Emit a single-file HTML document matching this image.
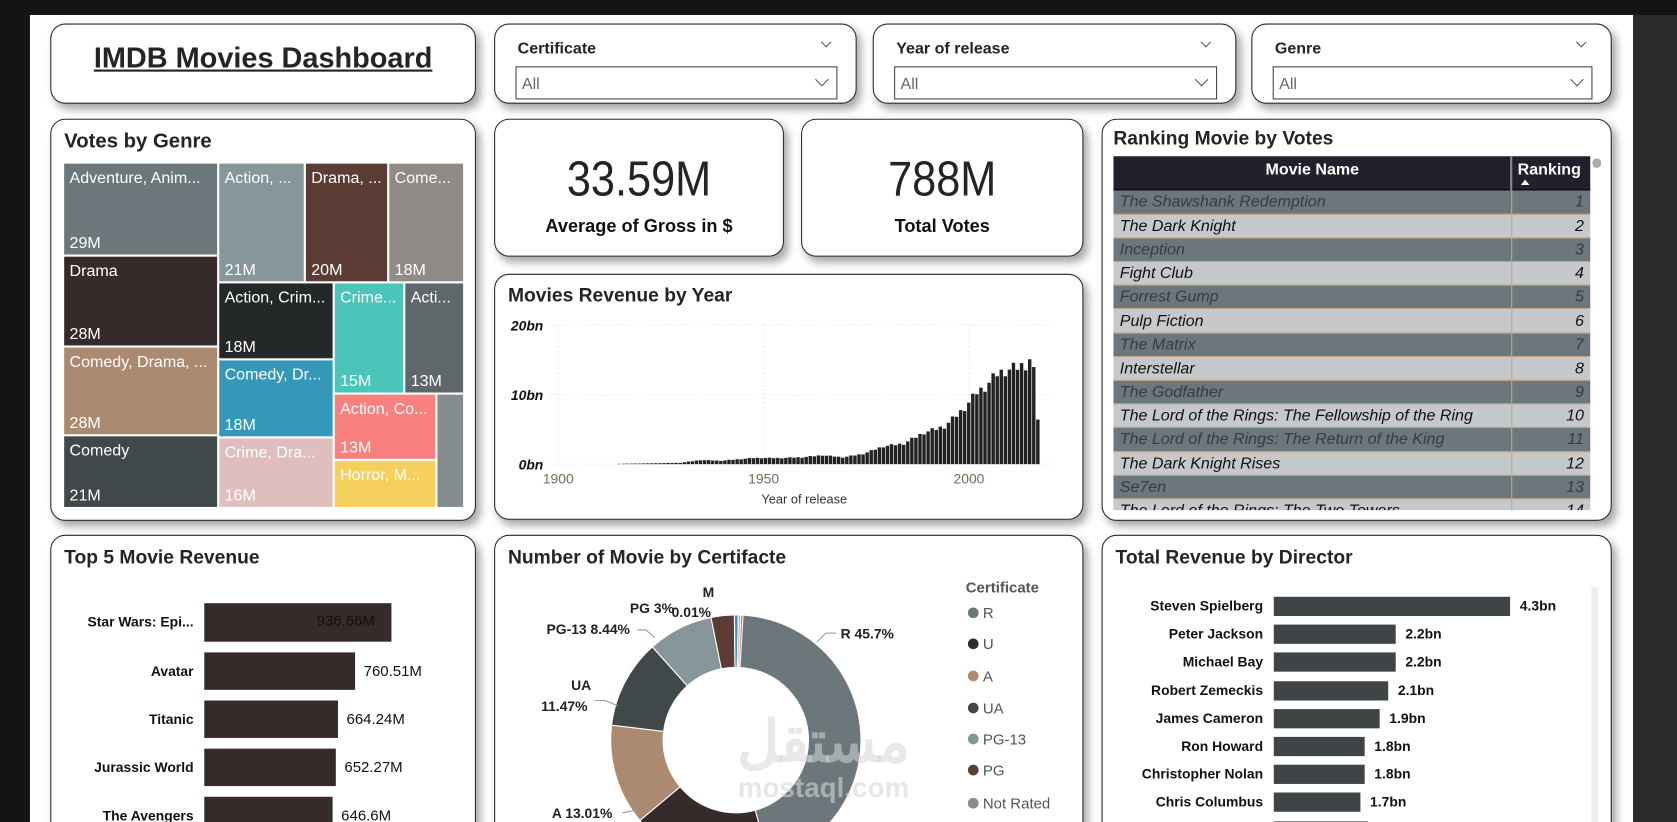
<!DOCTYPE html>
<html><head><meta charset="utf-8">
<style>
*{margin:0;padding:0;box-sizing:border-box}
html,body{width:1677px;height:822px;overflow:hidden;background:#141414;font-family:"Liberation Sans",Arial,sans-serif}
#w{position:absolute;left:0;top:0;width:1568px;height:769px;transform:scale(1.0695);transform-origin:0 0;overflow:hidden}
.abs{position:absolute}
.canvas{left:28px;top:14px;width:1499px;height:770px;background:#fff}
.rs{left:1527px;top:14px;width:41px;height:770px;background:#2a2a2a}
.p{position:absolute;background:#fff;border:1.5px solid #2a2a2a;border-radius:14px;box-shadow:4px 5px 8px rgba(0,0,0,.35)}
.t{position:absolute;font-weight:bold;color:#252423;font-size:19px}
.sl .lab{position:absolute;left:21px;top:14px;font-weight:bold;font-size:15px;color:#252423}
.sl .box{position:absolute;left:19px;top:39px;right:17px;height:31px;border:1px solid #444}
.sl .box span{position:absolute;left:5px;top:7px;font-size:15px;color:#666}
.chev{position:absolute;width:9px;height:9px;border-right:1.3px solid #555;border-bottom:1.3px solid #555;transform:rotate(45deg)}
.cell{position:absolute;color:#fff;font-size:15px;overflow:hidden;white-space:nowrap}
.cell .a{position:absolute;left:5px;top:5px}
.cell .b{position:absolute;left:5px;bottom:2px}
.kpi{position:absolute;width:100%;text-align:center;font-family:"Liberation Sans",sans-serif;font-size:46px;color:#252423;top:28px;transform:scaleX(0.88)}
.kl{position:absolute;width:100%;text-align:center;font-weight:bold;font-size:17px;color:#111;top:90px}
table{border-collapse:collapse;font-size:15px;font-style:italic}
td{height:22.2px;padding:0 6px;border-bottom:1.5px solid #c8a27e;white-space:nowrap}
tr.d td{background:#6b777b;color:#363c40}
tr.l td{background:#c5c9cb;color:#111}
td.n{text-align:right;border-left:1.5px solid #c8a27e}
.hb{position:absolute;font-size:13px;font-weight:bold;color:#111;text-align:right}
</style></head><body>
<div id="w">
<div class="abs canvas"></div>
<div class="abs rs"></div>

<div class="p" style="left:47px;top:22px;width:398px;height:75px">
 <div class="abs" style="left:0;width:100%;top:16px;text-align:center;font-weight:bold;font-size:27px;color:#252423;text-decoration:underline">IMDB Movies Dashboard</div>
</div>

<div class="p sl" style="left:462px;top:22px;width:339px;height:75px"><div class="lab">Certificate</div><div class="chev" style="right:24px;top:13px;width:7px;height:7px"></div><div class="box"><span>All</span><div class="chev" style="right:9px;top:7px"></div></div></div>
<div class="p sl" style="left:816px;top:22px;width:340px;height:75px"><div class="lab">Year of release</div><div class="chev" style="right:24px;top:13px;width:7px;height:7px"></div><div class="box"><span>All</span><div class="chev" style="right:9px;top:7px"></div></div></div>
<div class="p sl" style="left:1170px;top:22px;width:337px;height:75px"><div class="lab">Genre</div><div class="chev" style="right:24px;top:13px;width:7px;height:7px"></div><div class="box"><span>All</span><div class="chev" style="right:9px;top:7px"></div></div></div>

<div class="p" style="left:47px;top:111px;width:398px;height:376px">
 <div class="t" style="left:12px;top:10px">Votes by Genre</div>
</div>
<div class="abs" style="left:0;top:0">
 <div class="cell" style="left:60px;top:153px;width:143px;height:85px;background:#6b777b"><span class="a">Adventure, Anim...</span><span class="b">29M</span></div>
 <div class="cell" style="left:205px;top:153px;width:79px;height:110px;background:#87969a"><span class="a">Action, ...</span><span class="b">21M</span></div>
 <div class="cell" style="left:286px;top:153px;width:76px;height:110px;background:#5c3d36"><span class="a">Drama, ...</span><span class="b">20M</span></div>
 <div class="cell" style="left:364px;top:153px;width:69px;height:110px;background:#908b86"><span class="a">Come...</span><span class="b">18M</span></div>
 <div class="cell" style="left:60px;top:240px;width:143px;height:83px;background:#372a2a"><span class="a">Drama</span><span class="b">28M</span></div>
 <div class="cell" style="left:60px;top:325px;width:143px;height:81px;background:#ac8a72"><span class="a">Comedy, Drama, ...</span><span class="b">28M</span></div>
 <div class="cell" style="left:60px;top:408px;width:143px;height:66px;background:#414849"><span class="a">Comedy</span><span class="b">21M</span></div>
 <div class="cell" style="left:205px;top:265px;width:106px;height:70px;background:#242829"><span class="a">Action, Crim...</span><span class="b">18M</span></div>
 <div class="cell" style="left:205px;top:337px;width:106px;height:71px;background:#3498b9"><span class="a">Comedy, Dr...</span><span class="b">18M</span></div>
 <div class="cell" style="left:205px;top:410px;width:106px;height:64px;background:#dfbfbe"><span class="a">Crime, Dra...</span><span class="b">16M</span></div>
 <div class="cell" style="left:313px;top:265px;width:64px;height:102px;background:#4bc4ba"><span class="a">Crime...</span><span class="b">15M</span></div>
 <div class="cell" style="left:379px;top:265px;width:54px;height:102px;background:#5e6769"><span class="a">Acti...</span><span class="b">13M</span></div>
 <div class="cell" style="left:313px;top:369px;width:94px;height:60px;background:#f88180"><span class="a">Action, Co...</span><span class="b">13M</span></div>
 <div class="cell" style="left:313px;top:431px;width:94px;height:43px;background:#f5d05c"><span class="a">Horror, M...</span></div>
 <div class="cell" style="left:409px;top:369px;width:24px;height:105px;background:#848c8d"></div>
</div>

<div class="p" style="left:462px;top:111px;width:271px;height:129px"><div class="kpi">33.59M</div><div class="kl">Average of Gross in $</div></div>
<div class="p" style="left:749px;top:111px;width:264px;height:129px"><div class="kpi">788M</div><div class="kl">Total Votes</div></div>

<div class="p" style="left:462px;top:256px;width:551px;height:230px">
 <div class="t" style="left:12px;top:9px;font-size:18px">Movies Revenue by Year</div>
</div>
<svg class="abs" style="left:0;top:0" width="1568" height="769">
 <g stroke="#ddd" stroke-dasharray="1,3" stroke-width="1">
  <line x1="514" y1="304" x2="985" y2="304"/><line x1="514" y1="369" x2="985" y2="369"/><line x1="514" y1="434" x2="985" y2="434"/>
  <line x1="522" y1="304" x2="522" y2="434"/><line x1="714" y1="304" x2="714" y2="434"/><line x1="906" y1="304" x2="906" y2="434"/>
 </g>
 <g font-family="Liberation Sans" font-size="13" font-weight="bold" font-style="italic" fill="#111" text-anchor="end">
  <text x="508" y="309">20bn</text><text x="508" y="374">10bn</text><text x="508" y="439">0bn</text>
 </g>
 <g font-family="Liberation Sans" font-size="13" fill="#7a6a55" text-anchor="middle">
  <text x="522" y="452">1900</text><text x="714" y="452">1950</text><text x="906" y="452">2000</text>
 </g>
 <text x="752" y="471" font-family="Liberation Sans" font-size="12" fill="#333" text-anchor="middle">Year of release</text>
 <g id="bars" fill="#222"></g>
</svg>

<div class="p" style="left:1030px;top:111px;width:477px;height:376px;overflow:hidden">
 <div class="t" style="left:10px;top:7px;font-size:18px">Ranking Movie by Votes</div>
 <div class="abs" style="left:10px;top:34px;width:446px;height:331px;overflow:hidden">
  <div style="height:32px;background:#22202c;color:#fff;font-weight:bold;font-size:15px;position:relative;border-bottom:1.5px solid #000">
   <span class="abs" style="left:0;width:372px;text-align:center;top:4px">Movie Name</span>
   <span class="abs" style="left:371px;top:0;width:1.5px;height:32px;background:#888"></span>
   <span class="abs" style="left:378px;top:4px">Ranking</span>
   <span class="abs" style="left:381px;top:22px;width:0;height:0;border-left:4px solid transparent;border-right:4px solid transparent;border-bottom:5px solid #fff"></span>
  </div>
  <table style="width:446px">
   <col style="width:372px"><col>
   <tr class="d"><td>The Shawshank Redemption</td><td class="n">1</td></tr>
   <tr class="l"><td>The Dark Knight</td><td class="n">2</td></tr>
   <tr class="d"><td>Inception</td><td class="n">3</td></tr>
   <tr class="l"><td>Fight Club</td><td class="n">4</td></tr>
   <tr class="d"><td>Forrest Gump</td><td class="n">5</td></tr>
   <tr class="l"><td>Pulp Fiction</td><td class="n">6</td></tr>
   <tr class="d"><td>The Matrix</td><td class="n">7</td></tr>
   <tr class="l"><td>Interstellar</td><td class="n">8</td></tr>
   <tr class="d"><td>The Godfather</td><td class="n">9</td></tr>
   <tr class="l"><td>The Lord of the Rings: The Fellowship of the Ring</td><td class="n">10</td></tr>
   <tr class="d"><td>The Lord of the Rings: The Return of the King</td><td class="n">11</td></tr>
   <tr class="l"><td>The Dark Knight Rises</td><td class="n">12</td></tr>
   <tr class="d"><td>Se7en</td><td class="n">13</td></tr>
   <tr class="l"><td>The Lord of the Rings: The Two Towers</td><td class="n">14</td></tr>
  </table>
 </div>
 <div class="abs" style="left:458px;top:36px;width:8px;height:9px;border-radius:4px;background:#aaa"></div>
</div>

<div class="p" style="left:47px;top:500px;width:398px;height:310px">
 <div class="t" style="left:12px;top:10px;font-size:18px">Top 5 Movie Revenue</div>
</div>
<div class="abs" style="left:0;top:0">
 <div class="hb" style="left:40px;width:141px;top:574px">Star Wars: Epi...</div>
 <div class="abs" style="left:191px;top:564px;width:175px;height:36px;background:#352b2b"></div>
 <div class="abs" style="left:296px;top:572px;font-size:14px;color:#111">936.66M</div>
 <div class="hb" style="left:40px;width:141px;top:620px">Avatar</div>
 <div class="abs" style="left:191px;top:610px;width:141px;height:35px;background:#352b2b"></div>
 <div class="abs" style="left:340px;top:619px;font-size:14px;color:#111">760.51M</div>
 <div class="hb" style="left:40px;width:141px;top:665px">Titanic</div>
 <div class="abs" style="left:191px;top:655px;width:125px;height:35px;background:#352b2b"></div>
 <div class="abs" style="left:324px;top:664px;font-size:14px;color:#111">664.24M</div>
 <div class="hb" style="left:40px;width:141px;top:710px">Jurassic World</div>
 <div class="abs" style="left:191px;top:700px;width:123px;height:35px;background:#352b2b"></div>
 <div class="abs" style="left:322px;top:709px;font-size:14px;color:#111">652.27M</div>
 <div class="hb" style="left:40px;width:141px;top:755px">The Avengers</div>
 <div class="abs" style="left:191px;top:745px;width:120px;height:35px;background:#352b2b"></div>
 <div class="abs" style="left:319px;top:754px;font-size:14px;color:#111">646.6M</div>
</div>

<div class="p" style="left:462px;top:500px;width:551px;height:310px">
 <div class="t" style="left:12px;top:10px;font-size:18px">Number of Movie by Certifacte</div>
</div>
<svg class="abs" style="left:0;top:0" width="1568" height="769">
 <g id="slices"></g>
 <g font-family="Liberation Sans" font-size="13" font-weight="bold" fill="#222">
  <text x="786" y="597">R 45.7%</text>
  <text x="511" y="593">PG-13 8.44%</text>
  <text x="589" y="573">PG 3%</text>
  <text x="657" y="558">M</text>
  <text x="628" y="577">0.01%</text>
  <text x="534" y="645">UA</text>
  <text x="506" y="665">11.47%</text>
  <text x="516" y="765">A 13.01%</text>
 </g>
 <g stroke="#999" fill="none" stroke-width="1">
  <polyline points="782,592 772,592 764,600"/>
  <polyline points="596,589 604,589 612,596"/>
  <polyline points="556,655 566,655 578,660"/>
  <polyline points="582,760 592,758 602,748"/>
 </g>
 <text x="903" y="554" font-family="Liberation Sans" font-size="14" font-weight="bold" fill="#555">Certificate</text>
 <g font-family="Liberation Sans" font-size="14" fill="#555">
  <circle cx="910" cy="573" r="5" fill="#6b777b"/><text x="919" y="578">R</text>
  <circle cx="910" cy="602" r="5" fill="#372a2a"/><text x="919" y="607">U</text>
  <circle cx="910" cy="632" r="5" fill="#ac8a72"/><text x="919" y="637">A</text>
  <circle cx="910" cy="662" r="5" fill="#414849"/><text x="919" y="667">UA</text>
  <circle cx="910" cy="691" r="5" fill="#87969a"/><text x="919" y="696">PG-13</text>
  <circle cx="910" cy="720" r="5" fill="#5c3d36"/><text x="919" y="725">PG</text>
  <circle cx="910" cy="751" r="5" fill="#908b86"/><text x="919" y="756">Not Rated</text>
 </g>
 <text x="770" y="712" font-family="Liberation Sans, Noto Sans CJK SC, sans-serif" font-size="54" font-weight="bold" fill="#d6d6d6" fill-opacity=".55" text-anchor="middle">مستقل</text>
 <text x="770" y="745" font-family="Liberation Sans" font-size="26" font-weight="bold" fill="#d6d6d6" fill-opacity=".6" text-anchor="middle">mostaql.com</text>
</svg>

<div class="p" style="left:1030px;top:500px;width:477px;height:310px">
 <div class="t" style="left:12px;top:10px;font-size:18px">Total Revenue by Director</div>
 <div class="abs" style="left:457px;top:48px;width:6px;height:250px;background:#eee"></div>
</div>
<div class="abs" style="left:0;top:0" id="dir"></div>
</div>
<script>
(function(){
 var g=document.getElementById('bars'),s='';
 var pts=[[1915,0.05],[1920,0.1],[1930,0.2],[1935,0.6],[1940,0.5],[1948,0.9],[1955,0.9],[1960,1.0],[1965,1.3],[1970,1.0],[1975,1.5],[1980,2.6],[1985,3.0],[1990,4.6],[1995,5.5],[2000,8.2],[2003,10.5],[2005,11.2],[2008,13.2],[2010,13.6],[2012,14.0],[2015,14.5],[2016,15.3],[2017,13.4],[2018,6.7]];
 function v(y){for(var i=0;i<pts.length-1;i++){if(y>=pts[i][0]&&y<=pts[i+1][0]){var t=(y-pts[i][0])/(pts[i+1][0]-pts[i][0]);return pts[i][1]+t*(pts[i+1][1]-pts[i][1]);}}return 0;}
 for(var y=1915;y<=2018;y++){var h=v(y)*6.5*(0.93+0.14*((y*7)%5)/5);var x=522+(y-1900)*3.8;s+='<rect x="'+(x-1.6).toFixed(1)+'" y="'+(434-h).toFixed(1)+'" width="3.2" height="'+h.toFixed(1)+'"/>';}
 g.innerHTML=s;
})();
(function(){
 var cx=688,cy=692,R=117,r=68,g=document.getElementById('slices'),s='';
 var sl=[[45.7,'#6b777b'],[18.2,'#372a2a'],[13.01,'#ac8a72'],[11.47,'#414849'],[8.44,'#87969a'],[3,'#5c3d36'],[0.5,'#3498b9'],[0.3,'#f88180'],[0.3,'#908b86']];
 var a=0;
 sl.forEach(function(q){var a0=a,a1=a+q[0]/100*2*Math.PI;a=a1;
  function P(rad,an){return (cx+rad*Math.sin(an)).toFixed(2)+','+(cy-rad*Math.cos(an)).toFixed(2);}
  var L=(a1-a0)>Math.PI?1:0;
  s+='<path d="M'+P(R,a0)+' A'+R+','+R+' 0 '+L+' 1 '+P(R,a1)+' L'+P(r,a1)+' A'+r+','+r+' 0 '+L+' 0 '+P(r,a0)+' Z" fill="'+q[1]+'" stroke="#fff" stroke-width="1"/>';});
 g.innerHTML=s;
})();
(function(){
 var d=[['Steven Spielberg',1412,'4.3bn'],['Peter Jackson',1305,'2.2bn'],['Michael Bay',1305,'2.2bn'],['Robert Zemeckis',1298,'2.1bn'],['James Cameron',1290,'1.9bn'],['Ron Howard',1276,'1.8bn'],['Christopher Nolan',1276,'1.8bn'],['Chris Columbus',1272,'1.7bn'],['',1279,'']];
 var s='';d.forEach(function(q,i){var y=567+i*26.2;
 s+='<div class="hb" style="left:1040px;width:141px;top:'+(y-8)+'px">'+q[0]+'</div>';
 s+='<div class="abs" style="left:1191px;top:'+(y-9)+'px;width:'+(q[1]-1191)+'px;height:18px;background:#3f4547"></div>';
 s+='<div class="abs" style="left:'+(q[1]+9)+'px;top:'+(y-8)+'px;font-size:13px;font-weight:bold;color:#111">'+q[2]+'</div>';});
 document.getElementById('dir').innerHTML=s;
})();
</script>
</body></html>
